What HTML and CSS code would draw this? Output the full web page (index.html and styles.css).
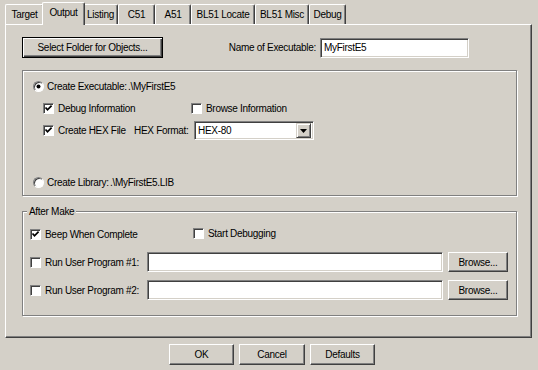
FILE: index.html
```html
<!DOCTYPE html>
<html>
<head>
<meta charset="utf-8">
<link rel="stylesheet" href="styles.css">
</head>
<body>
<div class="dialog">
  <div class="tabs">
    <div class="tab t-target">Target</div>
    <div class="tab tab-sel t-output">Output</div>
    <div class="tab t-listing">Listing</div>
    <div class="tab t-c51">C51</div>
    <div class="tab t-a51">A51</div>
    <div class="tab t-locate">BL51 Locate</div>
    <div class="tab t-misc">BL51 Misc</div>
    <div class="tab t-debug">Debug</div>
  </div>
  <div class="panel">
    <div class="row-top">
      <div class="btn btn-default btn-folder">Select Folder for Objects...</div>
      <span class="name-label">Name of Executable:</span>
      <div class="field field-name">MyFirstE5</div>
    </div>

    <div class="group group-out">
      <div class="grow g-exe">
        <span class="radio on"></span>
        <span class="lbl lbl-exe">Create Executable:</span>
        <span>.\MyFirstE5</span>
      </div>
      <div class="grow g-debug">
        <div class="chk-item w-debug">
          <span class="chk"><svg viewBox="0 0 11 11" width="11" height="11"><path d="M2.5 4.5 L4.5 6.8 L8.6 2.6" fill="none" stroke="#000" stroke-width="1.7"/></svg></span>
          <span>Debug Information</span>
        </div>
        <div class="chk-item">
          <span class="chk"></span>
          <span>Browse Information</span>
        </div>
      </div>
      <div class="grow g-hex">
        <div class="chk-item w-hex">
          <span class="chk"><svg viewBox="0 0 11 11" width="11" height="11"><path d="M2.5 4.5 L4.5 6.8 L8.6 2.6" fill="none" stroke="#000" stroke-width="1.7"/></svg></span>
          <span>Create HEX File</span>
        </div>
        <span class="hex-label">HEX Format:</span>
        <div class="select">
          <span class="select-text">HEX-80</span>
          <span class="select-arrow"><svg viewBox="0 0 7 4" width="7" height="4"><path d="M0 0 H7 L3.5 4 Z" fill="#000"/></svg></span>
        </div>
      </div>
      <div class="grow g-lib">
        <span class="radio"></span>
        <span class="lbl lbl-lib">Create Library:</span>
        <span>.\MyFirstE5.LIB</span>
      </div>
    </div>

    <div class="group group-after">
      <div class="legend">After Make</div>
      <div class="grow a-beep">
        <div class="chk-item w-beep">
          <span class="chk"><svg viewBox="0 0 11 11" width="11" height="11"><path d="M2.5 4.5 L4.5 6.8 L8.6 2.6" fill="none" stroke="#000" stroke-width="1.7"/></svg></span>
          <span>Beep When Complete</span>
        </div>
        <div class="chk-item start-dbg">
          <span class="chk"></span>
          <span>Start Debugging</span>
        </div>
      </div>
      <div class="grow a-run1">
        <div class="chk-item w-run">
          <span class="chk"></span>
          <span>Run User Program #1:</span>
        </div>
        <div class="field field-run"></div>
        <div class="btn btn-browse">Browse...</div>
      </div>
      <div class="grow a-run2">
        <div class="chk-item w-run">
          <span class="chk"></span>
          <span>Run User Program #2:</span>
        </div>
        <div class="field field-run"></div>
        <div class="btn btn-browse">Browse...</div>
      </div>
    </div>
  </div>
  <div class="footer">
    <div class="btn btn-foot">OK</div>
    <div class="btn btn-foot btn-cancel">Cancel</div>
    <div class="btn btn-foot">Defaults</div>
  </div>
</div>
</body>
</html>
```

FILE: styles.css
```css
* { box-sizing: border-box; }
html, body { margin: 0; padding: 0; }
body {
  width: 538px;
  height: 370px;
  overflow: hidden;
  background: #d4d0c8;
  color: #000;
  font-family: "Liberation Sans", Arial, sans-serif;
  font-size: 10px;
  letter-spacing: -0.3px;
  line-height: 13px;
  white-space: nowrap;
}
.dialog { padding: 2px 6px 0 5px; }

/* tabs */
.tabs {
  display: flex;
  align-items: flex-end;
  height: 22px;
}
.tab {
  height: 20px;
  background: #d4d0c8;
  border-top: 1px solid #fff;
  border-left: 1px solid #fff;
  border-right: 1px solid #404040;
  border-radius: 2px 2px 0 0;
  box-shadow: inset -1px 0 #808080;
  display: flex;
  align-items: center;
  justify-content: center;
  padding-bottom: 1px;
  position: relative;
  z-index: 1;
}
.tab-sel {
  height: 23px;
  margin: 0 -2px -1px;
  z-index: 2;
  padding-bottom: 3px;
}
.t-target { width: 39px; }
.t-output { width: 43px; }
.t-listing { width: 35px; }
.t-c51 { width: 37px; }
.t-a51 { width: 36px; }
.t-locate { width: 64px; }
.t-misc { width: 54px; }
.t-debug { width: 37px; }

/* panel */
.panel {
  height: 314px;
  border: 1px solid;
  border-color: #fff #404040 #404040 #fff;
  box-shadow: inset -1px -1px #808080;
  padding: 12px 14px 0 16px;
}

.row-top {
  display: flex;
  align-items: center;
  height: 21px;
}
.name-label { margin-left: auto; margin-right: 4px; }

/* controls */
.btn {
  background: #d4d0c8;
  border: 1px solid;
  border-color: #fff #404040 #404040 #fff;
  box-shadow: inset -1px -1px #808080;
  display: flex;
  align-items: center;
  justify-content: center;
}
.btn-default {
  border: 1px solid #000;
  box-shadow: inset 1px 1px #fff, inset -1px -1px #404040, inset -2px -2px #808080;
}
.btn-folder { width: 141px; height: 21px; }

.field {
  background: #fff;
  border: 1px solid;
  border-color: #808080 #fff #fff #808080;
  box-shadow: inset 1px 1px #404040, inset -1px -1px #d4d0c8;
  display: flex;
  align-items: center;
  padding-left: 3px;
}
.field-name { width: 149px; height: 20px; margin-right: 48px; }

.group {
  border: 1px solid #808080;
  box-shadow: inset 1px 1px #fff, 1px 1px #fff;
  width: 495px;
}
.group-out {
  margin-top: 12px;
  height: 126px;
  padding: 7px 0 0 10px;
}
.grow { display: flex; align-items: center; height: 16px; }
.g-debug { margin-top: 6px; padding-left: 10px; }
.g-hex { margin-top: 5px; height: 19px; padding-left: 10px; }
.g-lib { margin-top: 34px; }

.radio {
  width: 11px;
  height: 11px;
  border-radius: 50%;
  background: #fff;
  border: 1px solid;
  border-color: #808080 #fff #fff #808080;
  box-shadow: inset 1px 1px #404040;
  margin-right: 3px;
  display: flex;
  align-items: center;
  justify-content: center;
  flex: none;
}
.radio.on::after {
  content: "";
  width: 3px;
  height: 3px;
  border-radius: 50%;
  background: #000;
  box-shadow: 0 0 0 0.5px #000;
}
.lbl-exe { width: 81px; }
.lbl-lib { width: 63px; }

.chk-item { display: flex; align-items: center; }
.chk {
  width: 11px;
  height: 11px;
  background: #fff;
  border: 1px solid;
  border-color: #808080 #fff #fff #808080;
  box-shadow: inset 1px 1px #404040;
  margin-right: 4px;
  position: relative;
  flex: none;
}
.chk svg { position: absolute; left: -1px; top: -1px; }
.w-debug { width: 148px; }
.w-hex { width: 91px; }
.hex-label { margin-right: 3px; width: 57px; }

.select {
  width: 120px;
  height: 19px;
  background: #fff;
  border: 1px solid;
  border-color: #808080 #fff #fff #808080;
  box-shadow: inset 1px 1px #404040, inset -1px -1px #d4d0c8;
  display: flex;
  align-items: center;
  padding: 2px;
}
.select-text { flex: 1; padding-left: 1px; }
.select-arrow {
  width: 15px;
  height: 15px;
  background: #d4d0c8;
  border: 1px solid;
  border-color: #d4d0c8 #404040 #404040 #d4d0c8;
  box-shadow: inset 1px 1px #fff, inset -1px -1px #808080;
  display: flex;
  align-items: center;
  justify-content: center;
}

.group-after {
  margin-top: 15px;
  height: 105px;
  padding: 0 0 0 7px;
}
.legend {
  width: max-content;
  background: #d4d0c8;
  margin: -7px 0 0 -3px;
  padding: 0 2px;
  height: 13px;
}
.a-beep { margin-top: 8px; }
.w-beep { width: 163px; }
.start-dbg { margin-top: -1px; }
.a-run1 { margin-top: 10px; height: 20px; }
.a-run2 { margin-top: 8px; height: 20px; }
.w-run { width: 117px; }
.field-run { width: 296px; height: 20px; }
.btn-browse { width: 60px; height: 20px; margin-left: 5px; }

.footer {
  display: flex;
  gap: 5px;
  margin-top: 6px;
  padding-left: 164px;
}
.btn-foot { width: 65px; height: 21px; }
.btn-cancel { width: 66px; }
```
